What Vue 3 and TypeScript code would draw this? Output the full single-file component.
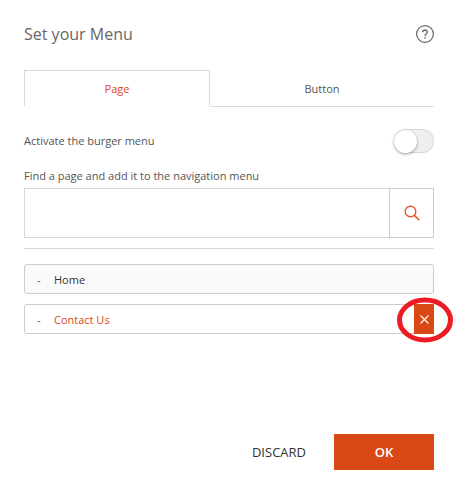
<script setup lang="ts">
import { ref } from 'vue'

interface MenuItem {
  id: number
  label: string
}

const activeTab = ref<'page' | 'button'>('page')
const burger = ref(false)
const query = ref('')
const selectedId = ref(2)
const items = ref<MenuItem[]>([
  { id: 1, label: 'Home' },
  { id: 2, label: 'Contact Us' },
])

function removeItem(id: number) {
  items.value = items.value.filter((item) => item.id !== id)
}
</script>

<template>
  <main class="dialog">
    <header class="header">
      <h1 class="title">Set your Menu</h1>
      <button class="help" type="button" aria-label="Help">
        <svg width="18" height="18" viewBox="0 0 18 18" fill="none" stroke="#666" aria-hidden="true">
          <circle cx="9" cy="9" r="8.4" stroke-width="1.2" />
          <path d="M6.7 7.2C6.7 5.8 7.6 5 9 5s2.300.8 2.300 2c0 1.800-2.300 1.900-2.300 3.900" stroke-width="1.3" />
          <path d="M9 12v1.400" stroke-width="1.4" />
        </svg>
      </button>
    </header>

    <div class="tabs" role="tablist">
      <button
        class="tab"
        :class="{ active: activeTab === 'page' }"
        type="button"
        role="tab"
        :aria-selected="activeTab === 'page'"
        @click="activeTab = 'page'"
      >Page</button>
      <button
        class="tab"
        :class="{ active: activeTab === 'button' }"
        type="button"
        role="tab"
        :aria-selected="activeTab === 'button'"
        @click="activeTab = 'button'"
      >Button</button>
    </div>

    <div class="option">
      <label for="burger">Activate the burger menu</label>
      <input id="burger" v-model="burger" class="switch" type="checkbox" role="switch" />
    </div>

    <label class="search-label" for="page-search">Find a page and add it to the navigation menu</label>
    <div class="search">
      <input id="page-search" v-model="query" class="search-input" type="text" />
      <button class="search-button" type="button" aria-label="Search">
        <svg width="16" height="16" viewBox="0 0 16 16" fill="none" stroke="#e05a2b" stroke-width="1.400" aria-hidden="true">
          <circle cx="6.500" cy="6.500" r="5.300" />
          <path d="M10.400 10.400L15.300 15.300" stroke-width="1.600" />
        </svg>
      </button>
    </div>

    <ul class="items">
      <li v-for="item in items" :key="item.id" class="item" :class="{ selected: item.id === selectedId }">
        <span class="dash">-</span>
        <span class="name">{{ item.label }}</span>
        <button
          v-if="item.id === selectedId"
          class="remove"
          type="button"
          :aria-label="`Remove ${item.label}`"
          @click="removeItem(item.id)"
        >
          <svg width="10" height="10" viewBox="0 0 10 10" stroke="#fff" stroke-width="1.100" aria-hidden="true">
            <path d="M1.500 1.500l8 8M9.500 1.500L1.500 9.500" />
          </svg>
          <svg class="ring" width="58" height="46" viewBox="0 0 58 46" fill="none" aria-hidden="true">
            <ellipse cx="29" cy="23" rx="25.500" ry="20" stroke="#ed1c24" stroke-width="5" />
          </svg>
        </button>
      </li>
    </ul>

    <footer class="footer">
      <button class="action discard" type="button">DISCARD</button>
      <button class="action ok" type="button">OK</button>
    </footer>
  </main>
</template>

<style>
body {
  background: #fff;
}
</style>

<style scoped>
.dialog {
  padding: 24px 23px 21px 24px;
  font-family: 'Open Sans', 'Noto Sans', sans-serif;
  font-size: 11px;
  line-height: 16px;
  color: #555;
}

.dialog *,
.dialog {
  box-sizing: border-box;
}

button {
  margin: 0;
  padding: 0;
  border: 0;
  background: none;
  color: inherit;
  font: inherit;
  cursor: pointer;
}

svg {
  display: block;
}

.header {
  display: flex;
  align-items: center;
  justify-content: space-between;
  height: 20px;
  margin-bottom: 26px;
}

.title {
  margin: 0;
  color: #666;
  font-size: 16px;
  font-weight: 400;
  line-height: 20px;
}

.tabs {
  display: grid;
  grid-template-columns: 186fr 224fr;
  margin-bottom: 22px;
}

.tab {
  height: 37px;
  border: 1px solid transparent;
  border-bottom-color: #d9d9d9;
}

.tab.active {
  border-color: #d9d9d9;
  border-bottom-color: transparent;
  color: #dc4814;
}

.option {
  display: flex;
  align-items: center;
  justify-content: space-between;
  margin-bottom: 15px;
}

.switch {
  display: flex;
  align-items: center;
  appearance: none;
  width: 40px;
  height: 24px;
  margin: 0;
  border-radius: 12px;
  background: #efefef;
  box-shadow: inset 0 0 0 1px #d9d9d9;
  cursor: pointer;
}

.switch::before {
  content: '';
  width: 23px;
  height: 23px;
  border-radius: 50%;
  background: #fff;
  box-shadow: 0 1px 3px rgba(0, 0, 0, 0.4);
}

.switch:checked {
  justify-content: flex-end;
  background: #dc4814;
}

.search-label {
  display: block;
  margin-bottom: 4px;
}

.search {
  display: flex;
  height: 50px;
  margin-bottom: 10px;
}

.search-input {
  flex: 1;
  min-width: 0;
  padding: 0 12px;
  border: 1px solid #d9d9d9;
  border-right: 0;
  border-radius: 0;
  background: #fff;
  color: inherit;
  font: inherit;
  outline: 0;
}

.search-button {
  display: flex;
  align-items: center;
  justify-content: center;
  width: 45px;
  border: 1px solid #ccc;
}

.items {
  display: flex;
  flex-direction: column;
  gap: 10px;
  margin: 0 0 100px;
  padding: 15px 0 0;
  border-top: 1px solid #d9d9d9;
  list-style: none;
}

.item {
  position: relative;
  display: flex;
  align-items: center;
  height: 30px;
  padding: 2px 0 0 12px;
  border: 1px solid #ccc;
  border-radius: 3px;
  background: #fafafa;
  color: #333;
}

.item.selected {
  background: #fff;
  color: #dc4814;
}

.dash {
  width: 17px;
  color: #555;
}

.remove {
  position: absolute;
  top: -1px;
  right: -1px;
  display: flex;
  align-items: center;
  justify-content: center;
  width: 20px;
  height: 30px;
  background: #da4816;
}

.ring {
  position: absolute;
  top: -7px;
  left: -18px;
  pointer-events: none;
}

.footer {
  display: flex;
  justify-content: flex-end;
}

.action {
  height: 36px;
  font-size: 13px;
}

.discard {
  padding: 0 28px;
  color: #333;
}

.ok {
  width: 100px;
  background: #da4816;
  color: #fff;
  font-weight: 600;
}
</style>
